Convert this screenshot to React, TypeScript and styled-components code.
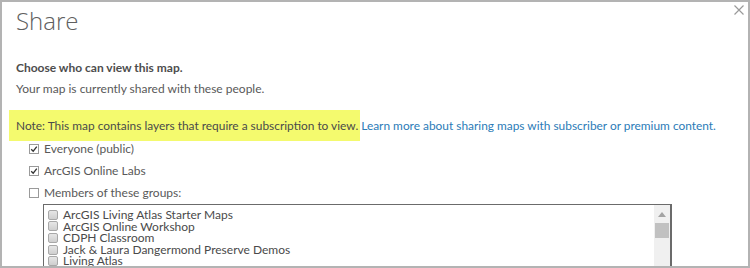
import React from "react";
import styled, { createGlobalStyle } from "styled-components";

const Global = createGlobalStyle`
  html, body { margin: 0; padding: 0; background: #fff; }
  body { font-family: Lato, "Open Sans", Arial, sans-serif; }
  * { box-sizing: border-box; }
`;

const Frame = styled.div`
  width: 750px;
  height: 268px;
  border: 2px solid #b3b3b3;
  overflow: hidden;
  position: relative;
  background: #fff;
  padding: 0 0 0 14px;
`;

const Header = styled.div`
  display: flex;
  justify-content: space-between;
  align-items: flex-start;
  height: 50px;
`;

const Title = styled.h1`
  margin: 4px 0 0 0;
  font-family: "Open Sans", Lato, sans-serif;
  font-size: 24px;
  line-height: 30px;
  font-weight: 300;
  color: #606060;
`;

const CloseButton = styled.button`
  border: 0;
  background: none;
  padding: 0;
  margin: 3px 4px 0 0;
  width: 10px;
  height: 10px;
  cursor: pointer;
  display: flex;
`;

const Heading = styled.p`
  margin: 8px 0 0 0;
  font-size: 12px;
  line-height: 16px;
  font-weight: 700;
  color: #4d4d4d;
`;

const Text = styled.p`
  margin: 5px 0 0 0;
  font-size: 12px;
  line-height: 16px;
  color: #595959;
`;

const NoteRow = styled.p`
  margin: 13px 0 0 -7px;
  font-size: 11.9px;
  line-height: 15px;
  color: #4a4a4a;
  display: flex;
  align-items: center;
`;

const Highlight = styled.span`
  background: #f4fa6e;
  padding: 8px 2px 8px 7px;
`;

const Link = styled.a`
  color: #2b7bb7;
  text-decoration: none;
  margin-left: 1px;
`;

const Options = styled.div`
  display: flex;
  flex-direction: column;
  gap: 6px;
  margin: 0 0 0 13px;
`;

const OptionRow = styled.label`
  display: flex;
  align-items: center;
  gap: 5px;
  font-size: 12px;
  line-height: 16px;
  color: #595959;
`;

const Box = styled.span`
  width: 10px;
  height: 10px;
  border: 1px solid #9a9a9a;
  background: #fff;
  display: inline-flex;
  align-items: center;
  justify-content: center;
`;

const ListBox = styled.div`
  margin: 3px 0 0 27px;
  width: 629px;
  height: 80px;
  border: 1px solid #6b6b6b;
  border-right-width: 2px;
  display: flex;
  padding: 0 0 0 4px;
`;

const ListItems = styled.div`
  flex: 1;
  display: flex;
  flex-direction: column;
  padding-top: 4px;
  overflow: hidden;
`;

const ListItem = styled.label`
  display: flex;
  align-items: center;
  gap: 5px;
  font-size: 12px;
  line-height: 11.6px;
  height: 11.6px;
  flex-shrink: 0;
  color: #4a4a4a;
`;

const GrayBox = styled.span`
  width: 10px;
  height: 10px;
  border: 1px solid #a8a8a8;
  border-radius: 2px;
  background: linear-gradient(#e6e6e6, #cfcfcf);
`;

const Scrollbar = styled.div`
  width: 16px;
  background: #f0f0f0;
  display: flex;
  flex-direction: column;
  align-items: center;
  padding-top: 7px;
`;

const Thumb = styled.div`
  width: 14px;
  height: 15px;
  background: #c1c1c1;
  margin-top: 6px;
`;

const Check = () => (
  <svg width="8" height="8" viewBox="0 0 8 8">
    <path d="M1.2 4.2 L3.2 6.2 L6.8 1.6" fill="none" stroke="#333" strokeWidth="1.3" />
  </svg>
);

const groups = [
  "ArcGIS Living Atlas Starter Maps",
  "ArcGIS Online Workshop",
  "CDPH Classroom",
  "Jack & Laura Dangermond Preserve Demos",
  "Living Atlas",
];

export default function App() {
  return (
    <>
      <Global />
      <Frame>
        <Header>
          <Title>Share</Title>
          <CloseButton aria-label="Close">
            <svg width="10" height="10" viewBox="0 0 10 10">
              <path d="M0.5 0.5 L9.5 9.5 M9.5 0.5 L0.5 9.5" stroke="#9a9a9a" strokeWidth="1.2" />
            </svg>
          </CloseButton>
        </Header>
        <Heading>Choose who can view this map.</Heading>
        <Text>Your map is currently shared with these people.</Text>
        <NoteRow>
          <Highlight>Note: This map contains layers that require a subscription to view.</Highlight>
          <Link href="#">Learn more about sharing maps with subscriber or premium content.</Link>
        </NoteRow>
        <Options>
          <OptionRow>
            <Box>
              <Check />
            </Box>
            Everyone (public)
          </OptionRow>
          <OptionRow>
            <Box>
              <Check />
            </Box>
            ArcGIS Online Labs
          </OptionRow>
          <OptionRow>
            <Box />
            Members of these groups:
          </OptionRow>
        </Options>
        <ListBox>
          <ListItems>
            {groups.map((g) => (
              <ListItem key={g}>
                <GrayBox />
                {g}
              </ListItem>
            ))}
          </ListItems>
          <Scrollbar>
            <svg width="8" height="5" viewBox="0 0 8 5">
              <path d="M0 5 L4 0 L8 5 Z" fill="#a3a3a3" />
            </svg>
            <Thumb />
          </Scrollbar>
        </ListBox>
      </Frame>
    </>
  );
}
